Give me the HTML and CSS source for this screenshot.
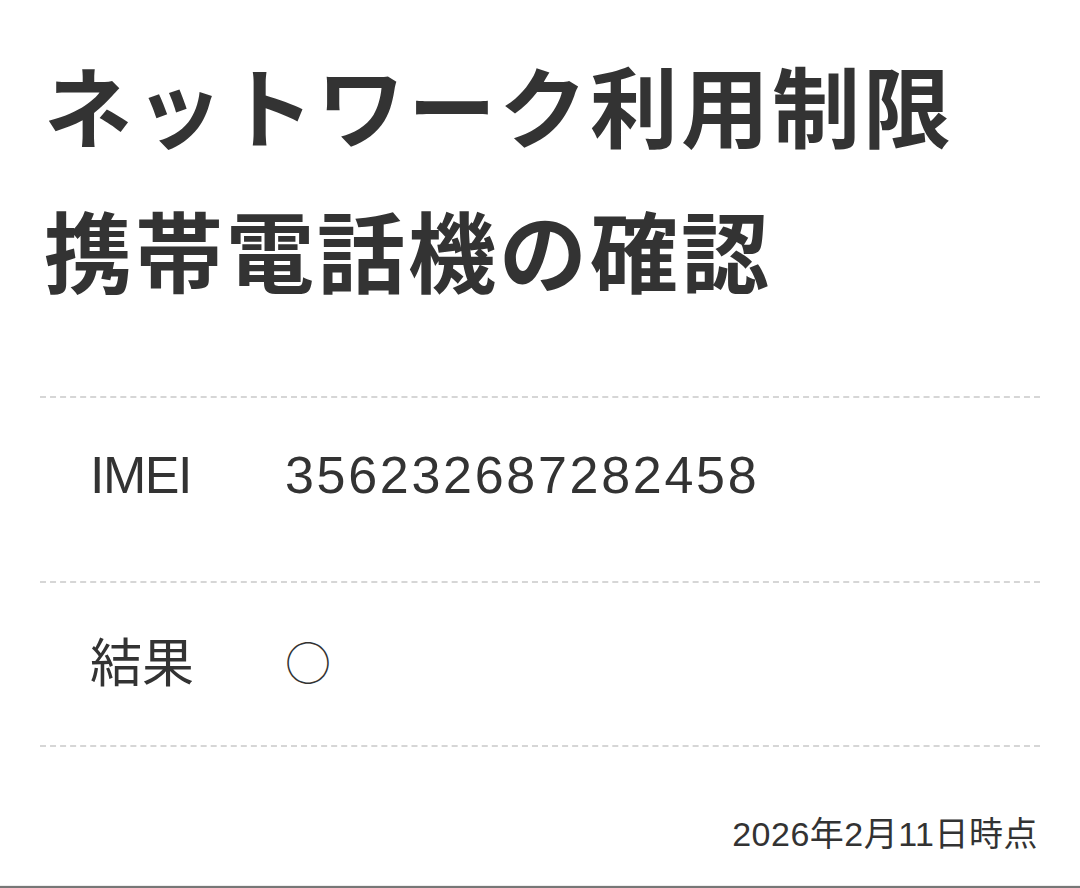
FILE: index.html
```html
<!DOCTYPE html>
<html lang="ja">
<head>
    <meta charset="UTF-8">
    <meta name="viewport" content="width=device-width, initial-scale=1.0">
    <title>ネットワーク利用制限携帯電話機の確認</title>
    <link rel="stylesheet" href="styles.css">
</head>
<body>
    <main class="page">
        <h1 class="title">ネットワーク利用制限<br>携帯電話機の確認</h1>

        <!-- 確認結果 -->
        <div class="result-list">
            <div class="row row-imei">
                <div class="label">IMEI</div>
                <div class="value">356232687282458</div>
            </div>
            <div class="row">
                <div class="label">結果</div>
                <div class="value mark">○</div>
            </div>
        </div>

        <p class="date">2026年2月11日時点</p>
    </main>
    <div class="bottom-bar"></div>
</body>
</html>
```

FILE: styles.css
```css
body {
    margin: 0;
    padding: 0;
    background-color: #fff;
    color: #333;
    font-family: 'Liberation Sans', 'Noto Sans CJK JP', sans-serif;
    height: 888px;
    display: flex;
    flex-direction: column;
    overflow: hidden;
}

.page {
    flex: 1;
    padding: 0 40px;
}

.title {
    font-family: 'Noto Sans CJK JP', sans-serif;
    font-size: 88px;
    font-weight: bold;
    line-height: 145px;
    letter-spacing: 3px;
    margin: 30px 0 0 4px;
    color: #333;
}

.result-list {
    margin-top: 76px;
    border-top: 2px dashed #d6d6d6;
}

.row {
    display: flex;
    align-items: center;
    height: 164px;
    padding-bottom: 9px;
    box-sizing: border-box;
    border-bottom: 2px dashed #d6d6d6;
    font-size: 52px;
}

.row-imei {
    height: 185px;
    padding-bottom: 0;
    align-items: flex-start;
}

.row-imei .label,
.row-imei .value {
    margin-top: 47px;
}

.label {
    width: 195px;
    padding-left: 50px;
}

.row-imei .label {
    letter-spacing: -1.5px;
}

.value {
    letter-spacing: 2.7px;
}

.mark {
    font-family: 'Noto Sans CJK JP', sans-serif;
    font-weight: 300;
    font-size: 46px;
    letter-spacing: 0;
}

.date {
    text-align: right;
    font-size: 34px;
    letter-spacing: 0.5px;
    margin: 60px 2px 0 0;
}

.bottom-bar {
    height: 2px;
    border-top: 1px solid #eee;
    background: #777;
}
```
